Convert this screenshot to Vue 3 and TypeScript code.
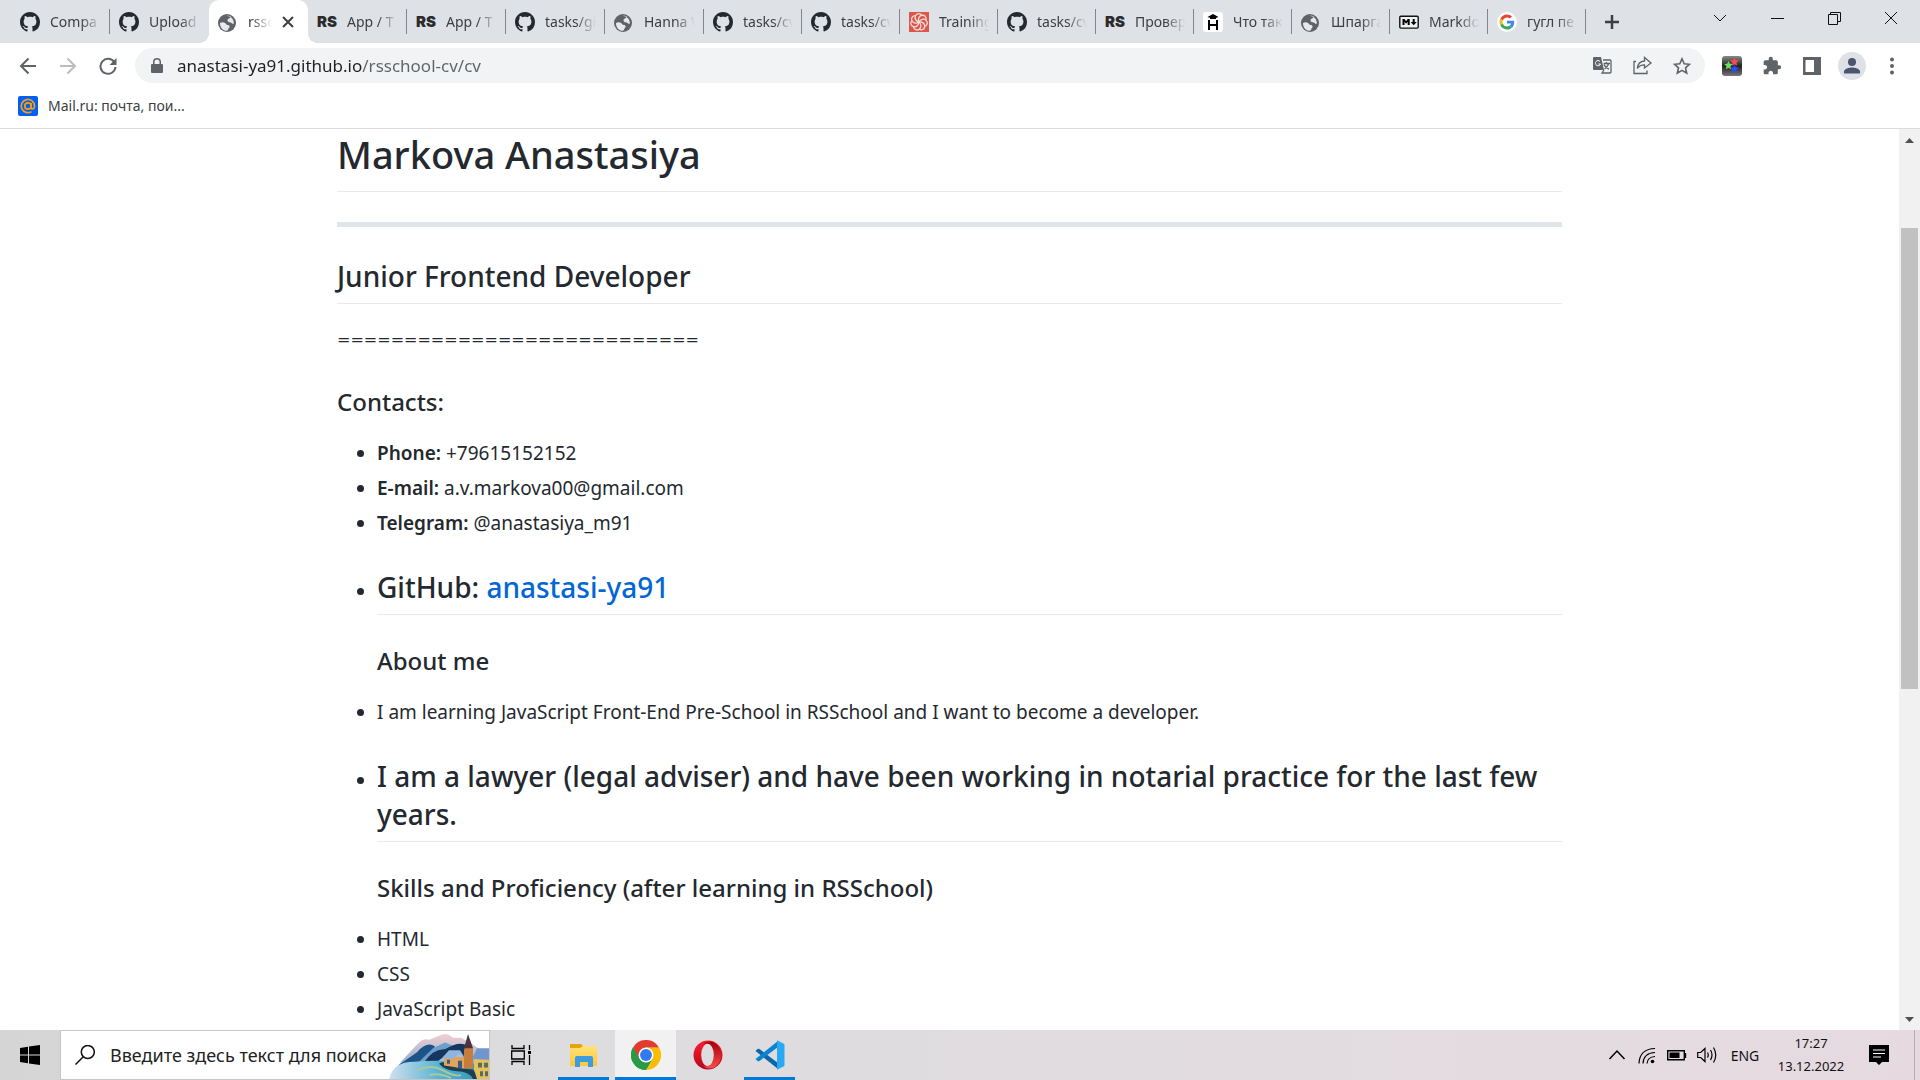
<script setup lang="ts">
import { ref } from 'vue'

interface Tab {
  icon: string
  title: string
  active?: boolean
  quiet?: boolean
}

const tabs: Tab[] = [
  { icon: 'github', title: 'Compa' },
  { icon: 'github', title: 'Upload', quiet: true },
  { icon: 'globe', title: 'rssc', active: true },
  { icon: 'rs', title: 'App / T' },
  { icon: 'rs', title: 'App / T' },
  { icon: 'github', title: 'tasks/gi' },
  { icon: 'globe', title: 'Hanna V' },
  { icon: 'github', title: 'tasks/cv' },
  { icon: 'github', title: 'tasks/cv' },
  { icon: 'training', title: 'Training' },
  { icon: 'github', title: 'tasks/cv' },
  { icon: 'rs', title: 'Провер' },
  { icon: 'hexlet', title: 'Что так' },
  { icon: 'globe', title: 'Шпарга' },
  { icon: 'markdown', title: 'Markdo' },
  { icon: 'google', title: 'гугл пе' },
]

const address = ref('anastasi-ya91.github.io/rsschool-cv/cv')
const query = ref('')

const contacts = [
  { label: 'Phone:', value: '+79615152152' },
  { label: 'E-mail:', value: 'a.v.markova00@gmail.com' },
  { label: 'Telegram:', value: '@anastasiya_m91' },
]
const skills = ['HTML', 'CSS', 'JavaScript Basic']
const divider = '='.repeat(27)

const apps = [
  { icon: 'explorer', name: 'Explorer', open: true, current: false },
  { icon: 'chrome', name: 'Chrome', open: true, current: true },
  { icon: 'opera', name: 'Opera', open: false, current: false },
  { icon: 'vscode', name: 'VS Code', open: true, current: false },
]
</script>

<template>
  <svg class="sprite" aria-hidden="true">
    <defs>
      <linearGradient id="opera-ring" x1="0" y1="0" x2="0" y2="1">
        <stop offset="0" stop-color="#ff1b2d" />
        <stop offset="1" stop-color="#b5081c" />
      </linearGradient>
      <linearGradient id="opera-inner" x1="0" y1="0" x2="0" y2="1">
        <stop offset="0" stop-color="#a0000c" />
        <stop offset="1" stop-color="#ff4b4b" />
      </linearGradient>
      <linearGradient id="folder-face" x1="0" y1="0" x2="0" y2="1">
        <stop offset="0" stop-color="#ffe07a" />
        <stop offset="1" stop-color="#fcc934" />
      </linearGradient>
      <linearGradient id="hill-back" x1="0" y1="0" x2="0" y2="1">
        <stop offset="0" stop-color="#f3cfd2" />
        <stop offset="1" stop-color="#6fa3d6" />
      </linearGradient>
      <linearGradient id="lake" x1="0" y1="0" x2="1" y2="0">
        <stop offset="0" stop-color="#cfe0ee" />
        <stop offset="0.5" stop-color="#57b3d3" />
        <stop offset="1" stop-color="#2f8fb0" />
      </linearGradient>
      <linearGradient id="ext-box" x1="0" y1="0" x2="0" y2="1">
        <stop offset="0" stop-color="#8a8a8a" />
        <stop offset="0.5" stop-color="#222" />
        <stop offset="1" stop-color="#777" />
      </linearGradient>
    </defs>
    <symbol id="github" viewBox="0 0 16 16">
      <path fill="#24292f" d="M8 0C3.58 0 0 3.58 0 8c0 3.54 2.29 6.53 5.47 7.59.4.07.55-.17.55-.38 0-.19-.01-.82-.01-1.49-2.01.37-2.53-.49-2.69-.94-.09-.23-.48-.94-.82-1.13-.28-.15-.68-.52-.01-.53.63-.01 1.08.58 1.23.82.72 1.21 1.87.87 2.33.66.07-.52.28-.87.51-1.07-1.78-.2-3.64-.89-3.64-3.95 0-.87.31-1.59.82-2.15-.08-.2-.36-1.02.08-2.12 0 0 .67-.21 2.2.82.64-.18 1.32-.27 2-.27s1.36.09 2 .27c1.53-1.04 2.2-.82 2.2-.82.44 1.1.16 1.92.08 2.12.51.56.82 1.27.82 2.15 0 3.07-1.87 3.75-3.65 3.95.29.25.54.73.54 1.48 0 1.07-.01 1.93-.01 2.2 0 .21.15.46.55.38A8.01 8.01 0 0 0 16 8c0-4.42-3.58-8-8-8z" />
    </symbol>
    <symbol id="globe" viewBox="0 0 20 20">
      <circle cx="9" cy="11" r="9" fill="#5f6368" />
      <path fill="#e6e8eb" d="M2 11c3-1.500 5-.5 6 1s3 .5 3.500 2-1 2-1.500 3.500-1 1.300-2 1.200C4.500 18.300 1.800 15 2 11zM8.500 4c1.500-.6 3.500-.4 4.500.4-1 .6-.5 1.600-2 2S9 8 10 9.500s2.500.5 3.500 1.500 1.500 1 2.400.6c0-3-1.300-5.600-3.700-6.900-1.200-.6-2.500-.9-3.700-.7z" />
    </symbol>
    <symbol id="training" viewBox="0 0 20 20">
      <path fill="#d9584b" d="M0 0h20v20H0z" />
      <g fill="none" stroke="#f7dcd8" stroke-width="1.300">
        <path v-for="n in 7" :key="n" :transform="`rotate(${n * 51} 10 10)`" d="M10 10c-1-3 0-6 3-6.500s5 2 4 5" />
      </g>
    </symbol>
    <symbol id="hexlet" viewBox="0 0 20 20">
      <rect width="20" height="20" rx="3" fill="#fff" />
      <path d="M4.500 5 10 2l5.500 3L12 6.200H8zM5 8h2v4h6V8h2v10h-2v-4H7v4H5z" />
      <path d="M7 5h6v2H7z" />
    </symbol>
    <symbol id="markdown" viewBox="0 0 20 20">
      <rect x=".8" y="4.300" width="18.400" height="11.800" rx="1" fill="#eef0f2" stroke="#111" stroke-width="1.400" />
      <path d="M3.500 13V7h2l1.600 2.200L8.700 7h2v6h-2V9.800l-1.600 2-1.600-2V13zM13.700 7h2v3h2l-3 3.300-3-3.300h2z" />
    </symbol>
    <symbol id="google" viewBox="0 0 64 64">
      <circle cx="32" cy="32" r="32" fill="#fff" />
      <g transform="translate(8 8)">
        <path fill="#ea4335" d="M24 9.500c3.540 0 6.710 1.220 9.210 3.600l6.850-6.850C35.900 2.380 30.470 0 24 0 14.620 0 6.510 5.380 2.560 13.220l7.980 6.190C12.430 13.720 17.740 9.500 24 9.500z" />
        <path fill="#4285f4" d="M46.980 24.550c0-1.570-.15-3.090-.38-4.550H24v9.020h12.940c-.58 2.960-2.260 5.480-4.780 7.180l7.730 6c4.510-4.180 7.090-10.360 7.090-17.650z" />
        <path fill="#fbbc05" d="M10.530 28.590c-.48-1.450-.76-2.990-.76-4.590s.27-3.140.76-4.590l-7.980-6.190C.92 16.460 0 20.120 0 24c0 3.880.92 7.540 2.560 10.780l7.970-6.190z" />
        <path fill="#34a853" d="M24 48c6.480 0 11.930-2.130 15.890-5.810l-7.730-6c-2.150 1.450-4.920 2.300-8.160 2.300-6.260 0-11.570-4.220-13.470-9.910l-7.980 6.190C6.510 42.620 14.620 48 24 48z" />
      </g>
    </symbol>
    <symbol id="explorer" viewBox="0 0 30 30">
      <path fill="#e5a50a" d="M1 4h11l2 2v5H1z" />
      <path fill="url(#folder-face)" d="M1 8h10l3-2h14v20H1z" />
      <path fill="#3f9be0" d="M6 27V18q0-2 2-2h14q2 0 2 2v9h-5v-5h-8v5z" />
    </symbol>
    <symbol id="chrome" viewBox="0 0 48 48">
      <path fill="#34a853" d="M24 24 3.200 12A24 24 0 0 0 24 48l10.400-18z" />
      <path fill="#fbbc05" d="M24 24h20.800A24 24 0 0 1 24 48l10.400-18zM24 12h20.800A24 24 0 0 1 24 48l10.400-18z" />
      <path fill="#e33b2e" d="M3.200 12a24 24 0 0 1 41.600 0H24L13.600 30z" />
      <path fill="#2a9a47" d="M3.200 12 13.600 30A12 12 0 0 0 34.400 30L24 48A24 24 0 0 1 3.200 12z" />
      <circle cx="24" cy="24" r="12" fill="#fff" />
      <circle cx="24" cy="24" r="9.500" fill="#2f7bf0" />
    </symbol>
    <symbol id="opera" viewBox="0 0 30 30">
      <circle cx="15" cy="15" r="14.500" fill="url(#opera-ring)" />
      <path fill="url(#opera-inner)" d="M10 4.500C13 1 19 .5 23 3.800a14.500 14.500 0 0 1 0 22.400c-4 3.300-10 2.800-13-.7 5 3 11-1 11-10.500S15 1.500 10 4.500z" />
      <ellipse cx="14.500" cy="15" rx="6.300" ry="11.300" fill="#dddcde" />
    </symbol>
    <symbol id="vscode" viewBox="0 0 30 30">
      <path fill="#0a67a8" d="m.5 11 2-2q1-.7 2 0L23 23v6z" />
      <path fill="#0a84d0" d="m.5 19 2 2q1 .7 2 0L23 7V1z" />
      <path fill="#0a84d0" d="M22 29.500V.5L25 2v26z" />
      <path fill="#29a9f2" d="M22 .5 28.500 3.500q1 .5 1 1.500v20q0 1-1 1.500L22 29.500z" />
    </symbol>
  </svg>

  <div class="desktop">
    <header>
      <div class="tabstrip">
        <nav class="tabs" aria-label="Tabs">
          <button v-for="(tab, i) in tabs" :key="i" class="tab" :class="{ active: tab.active, quiet: tab.quiet || tab.active }">
            <span v-if="tab.icon === 'rs'" class="favicon rs">RS</span>
            <svg v-else class="favicon"><use :href="`#${tab.icon}`" /></svg>
            <span class="tab-title">{{ tab.title }}</span>
            <svg v-if="tab.active" class="tab-close" viewBox="0 0 12 12"><path d="m1 1 10 10M11 1 1 11" /></svg>
          </button>
        </nav>
        <button class="new-tab" aria-label="New tab">
          <svg width="16" height="16" viewBox="0 0 16 16"><path d="M8 1v14M1 8h14" stroke="#3c4043" stroke-width="2.500" /></svg>
        </button>
        <div class="window-buttons">
          <button aria-label="Search tabs"><svg width="14" height="14" viewBox="0 0 14 14"><path d="m1 4 6 6 6-6" /></svg></button>
          <button aria-label="Minimize"><svg width="14" height="14" viewBox="0 0 14 14"><path d="M1 7.500h13" /></svg></button>
          <button aria-label="Restore"><svg width="14" height="14" viewBox="0 0 14 14"><path d="M1.500 3.500h9v10h-9zM3.500 3V1.500h10v9H11" /></svg></button>
          <button aria-label="Close"><svg width="14" height="14" viewBox="0 0 14 14"><path d="m1 1 12 12M13 1 1 13" /></svg></button>
        </div>
      </div>

      <div class="toolbar">
        <button class="tool" aria-label="Back"><svg width="18" height="18" viewBox="0 0 18 18"><path d="M17 9H2M9.500 1.500 2 9l7.500 7.500" /></svg></button>
        <button class="tool dim" aria-label="Forward"><svg width="18" height="18" viewBox="0 0 18 18"><path d="M1 9h15M8.500 1.500 16 9l-7.500 7.500" /></svg></button>
        <button class="tool" aria-label="Reload"><svg width="18" height="18" viewBox="0 0 18 18"><path d="M15.500 5.500A7.500 7.500 0 1 0 16.500 10" /><path class="solid" d="M17.500 1v7h-7z" /></svg></button>
        <div class="omnibox">
          <svg class="lock" width="12" height="16" viewBox="0 0 12 16"><path fill="#5f6368" d="M1 6h1V4a4 4 0 0 1 8 0v2h1q1 0 1 1v7q0 1-1 1H1q-1 0-1-1V7q0-1 1-1zm2.500 0h5V4a2.500 2.500 0 0 0-5 0z" /></svg>
          <input v-model="address" class="address" aria-label="Address" spellcheck="false" />
          <button class="tool" aria-label="Translate">
            <svg width="19" height="19" viewBox="0 0 19 19">
              <path class="solid" d="M1 1h7l3 13H1q-1 0-1-1V2q0-1 1-1z" />
              <path d="M10 4h7q1 0 1 1v11q0 1-1 1H9l2-3M10.500 7.500H17M13.500 6v1.500M11 8.500q2 4 5 4.500M15.500 8q-1 3-4 5" class="thin" />
              <path d="M7 5.500A2.600 2.600 0 1 0 7.500 8H5.300" class="white" />
            </svg>
          </button>
          <button class="tool" aria-label="Share">
            <svg width="19" height="19" viewBox="0 0 19 19"><path class="thin" d="M3 5.500H1v12h13v-3M11.500 5V1.500L18 7l-6.500 5V8.800C8 8.800 6 9.800 4.300 12.500 4.700 8 7.500 5.300 11.500 5z" /></svg>
          </button>
          <button class="tool" aria-label="Bookmark">
            <svg width="18" height="18" viewBox="0 0 18 18"><path d="m9 1.800 2.200 5 5.300.5-4 3.600 1.200 5.300L9 13.400l-4.700 2.800 1.200-5.300-4-3.600 5.300-.5z" class="medium" /></svg>
          </button>
        </div>
        <button class="tool" aria-label="Stars extension">
          <svg width="20" height="20" viewBox="0 0 20 20">
            <rect width="20" height="20" rx="3" fill="url(#ext-box)" />
            <polygon fill="#ff4a4a" points="12.500,1.500 13.800,4.300 16.800,4.600 14.500,6.700 15.200,9.700 12.500,8.200 9.800,9.700 10.500,6.700 8.200,4.600 11.200,4.300" />
            <polygon fill="#6be05c" points="6.500,5 7.800,7.800 10.800,8.100 8.500,10.200 9.200,13.200 6.500,11.700 3.800,13.200 4.500,10.200 2.200,8.100 5.200,7.800" />
            <polygon fill="#2b4dff" points="12.500,8.500 13.800,11.300 16.800,11.600 14.500,13.700 15.200,16.700 12.500,15.200 9.800,16.700 10.500,13.700 8.200,11.600 11.200,11.300" />
          </svg>
        </button>
        <button class="tool" aria-label="Extensions">
          <svg width="20" height="20" viewBox="0 0 24 24"><path class="solid" d="M20.500 11H19V7c0-1.100-.9-2-2-2h-4V3.500a2.500 2.500 0 0 0-5 0V5H4c-1.100 0-1.990.9-1.990 2v3.800H3.500c1.490 0 2.700 1.210 2.700 2.700s-1.210 2.700-2.700 2.700H2V20c0 1.100.9 2 2 2h3.800v-1.500c0-1.490 1.210-2.700 2.700-2.700 1.490 0 2.700 1.210 2.700 2.700V22H17c1.100 0 2-.9 2-2v-4h1.500a2.500 2.500 0 0 0 0-5z" /></svg>
        </button>
        <button class="tool" aria-label="Side panel">
          <svg width="18" height="18" viewBox="0 0 18 18"><path class="solid" fill-rule="evenodd" d="M0 0h18v18H0zM2.500 3v12H11V3z" /></svg>
        </button>
        <button class="tool" aria-label="Profile">
          <svg width="28" height="28" viewBox="0 0 28 28"><circle cx="14" cy="14" r="14" fill="#dee1e6" /><circle cx="14" cy="10" r="4" fill="#4a5570" /><path class="person" d="M6 21.500v-2c0-2.700 5.300-4 8-4s8 1.300 8 4v2z" /></svg>
        </button>
        <button class="tool" aria-label="Menu">
          <svg width="18" height="18" viewBox="0 0 18 18"><g fill="#5f6368"><circle cx="9" cy="2.500" r="2" /><circle cx="9" cy="9" r="2" /><circle cx="9" cy="15.500" r="2" /></g></svg>
        </button>
      </div>

      <div class="bookmarks">
        <a class="bookmark" href="#mail">
          <svg width="20" height="20" viewBox="0 0 20 20"><rect width="20" height="20" rx="2" fill="#005ff9" /><circle cx="10" cy="10" r="3.200" fill="none" stroke="#ff9e00" stroke-width="1.700" /><path d="M13.200 7v4q0 2 1.500 2t1.800-3A6.600 6.600 0 1 0 13.500 15.600" fill="none" stroke="#ff9e00" stroke-width="1.700" /></svg>
          <span>Mail.ru: почта, пои...</span>
        </a>
      </div>
    </header>

    <div class="viewport">
      <main class="page">
        <article class="markdown">
          <h1>Markova Anastasiya</h1>
          <hr />
          <h2>Junior Frontend Developer</h2>
          <p class="divider">{{ divider }}</p>
          <h3>Contacts:</h3>
          <ul>
            <li v-for="c in contacts" :key="c.label"><strong>{{ c.label }}</strong> {{ c.value }}</li>
            <li>
              <h2>GitHub: <a href="#github-profile">anastasi-ya91</a></h2>
              <h3>About me</h3>
            </li>
            <li class="flush">I am learning JavaScript Front-End Pre-School in RSSchool and I want to become a developer.</li>
            <li>
              <h2>I am a lawyer (legal adviser) and have been working in notarial practice for the last few years.</h2>
              <h3>Skills and Proficiency (after learning in RSSchool)</h3>
            </li>
            <li v-for="(s, i) in skills" :key="s" :class="{ flush: i === 0 }">{{ s }}</li>
          </ul>
        </article>
      </main>
      <div class="scrollbar" aria-hidden="true">
        <svg viewBox="0 0 21 21"><path d="M6 14h9l-4.500-5z" /></svg>
        <div class="track"><div class="thumb"></div></div>
        <svg viewBox="0 0 21 21"><path d="M6 8h9l-4.500 5z" /></svg>
      </div>
    </div>

    <footer class="taskbar">
      <button class="start" aria-label="Start">
        <svg width="20" height="20" viewBox="0 0 20 20"><path d="m0 3 8-1.200v7.700H0zM9 1.600 20 0v9.500H9zM0 10.500h8v7.700L0 17zM9 10.500h11V20L9 18.400z" /></svg>
      </button>
      <label class="search">
        <svg width="20" height="20" viewBox="0 0 20 20"><path d="M.5 19.500 8 12M19.300 7a6.500 6.500 0 1 1-13 0 6.500 6.500 0 0 1 13 0z" fill="none" stroke="#111" stroke-width="1.500" /></svg>
        <input v-model="query" placeholder="Введите здесь текст для поиска" aria-label="Поиск" />
        <svg class="scene" width="100" height="46" viewBox="0 0 100 48" preserveAspectRatio="none">
          <path fill="url(#hill-back)" d="M12 30 28 12q6-7 12-5l12-5q6-3 12 3l8 0 8 4 8 6 12 8v20H6z" />
          <path fill="#1c5488" d="M9 34 28 20q10-12 18-6l-10 18z" />
          <path fill="#6c9fcb" d="M28 32 44 16l12-6 10 4-24 20z" />
          <path fill="#17365f" d="M34 32q10-16 22-15 12-8 20-5l4 20z" />
          <path fill="#a9bfd8" d="M46 32q12-12 26-12l6 12z" />
          <path fill="url(#lake)" d="M0 48q4-18 25-18 20-2 45 0l30 4v14z" />
          <path fill="none" stroke="#a9c99b" stroke-width="2" d="M28 39q14-7 26 0t18 5M40 44q10-3 22 3" />
          <path fill="#1d3f52" d="M50 32q4-4 12 2 10 4 22 4l6 10h-6q-4-8-16-8-12-1-18-8z" />
          <path fill="#c77c3c" d="M75 18 79 3l5 14v20h-9z" />
          <path fill="#4b3440" d="M75 16 79 1l5 15z" />
          <path fill="#e4a35a" d="M55 25h20v12l-20-3z" />
          <path fill="#8db5df" d="m53 26 7-8 11 0 5 8-6-5-6 6z" />
          <path fill="#3b5a86" d="M69 29h4v8h-4zM58 28h3v4h-3z" />
          <path fill="#e5c05e" d="M85 26h15v22H88l-3-10z" />
          <path fill="#7095cf" d="m83 27 5-11h12v12z" />
          <path fill="#5a6d5c" d="M89 31h4v5h-4zM95 31h4v5h-4zM91 40h3v5h-3zM96 40h3v5h-3z" />
        </svg>
      </label>
      <button class="task-view" aria-label="Task view">
        <svg width="21" height="20" viewBox="0 0 21 20"><path d="M1 0v3.500h12V0M1 20v-3.500h12V20M.7 6h12.600v8H.7zM18.500 0v5M18.500 10v10" fill="none" stroke="#000" stroke-width="1.300" /><path d="M17 6h3v3h-3z" /></svg>
      </button>
      <button v-for="a in apps" :key="a.icon" class="app" :class="{ open: a.open, current: a.current }" :aria-label="a.name">
        <svg width="30" height="30"><use :href="`#${a.icon}`" /></svg>
      </button>
      <div class="tray">
        <button class="tray-icon" aria-label="Hidden icons"><svg width="18" height="18" viewBox="0 0 18 18"><path d="m1.500 13 7.500-8 7.500 8" stroke-width="1.500" /></svg></button>
        <button class="tray-icon" aria-label="Network"><svg width="18" height="18" viewBox="0 0 18 18"><path d="M1 17.500Q1.500 3 17 2.500M5 17.500Q5.500 7 17 6.500M9 17.500q.5-6.500 8-7" /><circle cx="14.500" cy="15.500" r="1.800" fill="#000" stroke="none" /></svg></button>
        <button class="tray-icon" aria-label="Battery"><svg width="20" height="18" viewBox="0 0 20 18"><path d="M.7 4.700h16.600v9H.7zM18.500 7v5" stroke-width="1.400" /><path d="M2.500 6.500h10V12h-10z" fill="#000" stroke="none" /></svg></button>
        <button class="tray-icon" aria-label="Volume"><svg width="20" height="18" viewBox="0 0 20 18"><path d="M.7 6.500h3L8 2.500v13l-4.300-4h-3zM10.500 6.500q1.500 2.500 0 5M13.500 4q3 5 0 10M16.500 1.500q4.500 7.500 0 15" /></svg></button>
        <button class="language">ENG</button>
        <time class="clock" datetime="2022-12-13T17:27"><span>17:27</span><span>13.12.2022</span></time>
        <button class="notice" aria-label="Notifications"><svg width="20" height="20" viewBox="0 0 20 20"><path d="M0 0h20v17h-7l-3 3-3-3H0z" /><path d="M4 5h12M4 8.500h12M4 12h8" stroke="#fff" stroke-width="1.200" /></svg></button>
        <div class="peek"></div>
      </div>
    </footer>
  </div>
</template>

<style>
html,
body {
  margin: 0;
  background: #fff;
}
</style>

<style scoped>
.sprite {
  position: absolute;
  width: 0;
  height: 0;
}
.desktop {
  display: flex;
  flex-direction: column;
  height: 100vh;
  overflow: hidden;
  font-family: 'Noto Sans', 'Open Sans', sans-serif;
  color: #24292f;
}
button {
  display: flex;
  align-items: center;
  justify-content: center;
  flex: none;
  padding: 0;
  border: 0;
  background: none;
  font: inherit;
  color: inherit;
}
input {
  min-width: 0;
  padding: 0;
  border: 0;
  outline: 0;
  background: none;
  font: inherit;
}

/* tab strip */
.tabstrip {
  display: flex;
  height: 43px;
  padding-left: 11px;
  background: #dee1e6;
}
.tabs {
  display: flex;
}
.tab {
  justify-content: flex-start;
  width: 98px;
  height: 43px;
  padding: 0 9px;
  gap: 10px;
  position: relative;
  font-size: 14px;
  color: #3c4043;
}
.tab:nth-child(-n + 7) {
  width: 99px;
}
.tab:not(.quiet)::after {
  content: '';
  position: absolute;
  right: 0;
  top: 9px;
  width: 1px;
  height: 25px;
  background: #80868b;
}
.favicon {
  flex: none;
  width: 20px;
  height: 20px;
}
.favicon.rs {
  font-family: Inter, sans-serif;
  font-size: 15px;
  font-weight: 900;
  line-height: 20px;
  color: #2b2b2b;
}
.tab-title {
  flex: 1;
  min-width: 0;
  overflow: hidden;
  white-space: nowrap;
  text-align: left;
  mask-image: linear-gradient(90deg, #000 calc(100% - 20px), transparent);
}
.tab.active {
  border-radius: 10px 10px 0 0;
  background: #fff;
}
.tab.active::before {
  content: '';
  position: absolute;
  left: -10px;
  right: -10px;
  bottom: 0;
  height: 10px;
  background:
    radial-gradient(circle at 0 0, transparent 10px, #fff 10px) left / 10px 10px no-repeat,
    radial-gradient(circle at 100% 0, transparent 10px, #fff 10px) right / 10px 10px no-repeat;
}
.tab-close {
  flex: none;
  width: 12px;
  height: 12px;
  margin-right: 5px;
  stroke: #3c4043;
  stroke-width: 2;
}
.new-tab {
  width: 52px;
}
.window-buttons {
  display: flex;
  margin-left: auto;
  padding-right: 1px;
}
.window-buttons button {
  width: 57px;
  height: 36px;
}
.window-buttons svg {
  fill: none;
  stroke: #111;
}

/* toolbar */
.toolbar {
  display: flex;
  align-items: center;
  height: 45px;
  padding: 0 8px;
}
.tool {
  width: 40px;
  height: 35px;
}
.tool path {
  fill: none;
  stroke: #5f6368;
  stroke-width: 2;
}
.tool path.solid {
  fill: #5f6368;
  stroke: none;
}
.tool path.person {
  fill: #4a5570;
  stroke: none;
}
.tool path.thin {
  stroke-width: 1.3;
}
.tool path.medium {
  stroke-width: 1.6;
}
.tool path.white {
  stroke: #fff;
  stroke-width: 1;
}
.tool.dim path {
  stroke: #babcbe;
}
.omnibox {
  display: flex;
  align-items: center;
  flex: 1;
  height: 35px;
  margin: 0 7px;
  padding: 0 3px 0 16px;
  border-radius: 18px;
  background: #f1f3f4;
}
.lock {
  flex: none;
}
.address {
  flex: 1;
  height: 30px;
  margin-left: 14px;
  font-size: 17px;
  color: transparent;
  background: linear-gradient(90deg, #202124 185px, #5f6368 185px);
  background-clip: text;
  -webkit-background-clip: text;
}
.bookmarks {
  display: flex;
  align-items: center;
  height: 40px;
  padding: 0 18px;
  border-bottom: 1px solid #dadce0;
}
.bookmark {
  display: flex;
  align-items: center;
  gap: 10px;
  margin-bottom: 5px;
  font-size: 14px;
  color: #3c4043;
  text-decoration: none;
}

/* document */
.viewport {
  display: flex;
  flex: 1;
  min-height: 0;
}
.page {
  flex: 1;
  overflow: hidden;
}
.markdown {
  max-width: 1225px;
  margin: 0 auto;
  font-size: 19px;
  line-height: 30px;
}
.markdown h1,
.markdown h2,
.markdown h3 {
  margin: 30px 0 20px;
  font-weight: 500;
}
.markdown h1 {
  margin-top: 0;
  padding-bottom: 12px;
  border-bottom: 1px solid #e8eaed;
  font-size: 38px;
  line-height: 50px;
}
.markdown h2 {
  padding-bottom: 8px;
  border-bottom: 1px solid #e8eaed;
  font-size: 28px;
  line-height: 38px;
}
.markdown h3 {
  font-size: 24px;
  line-height: 32px;
}
.markdown hr {
  height: 5px;
  margin: 30px 0;
  border: 0;
  background: #e1e4e8;
}
.markdown p {
  margin: 20px 0;
}
.markdown .divider {
  font-family: 'DejaVu Sans', sans-serif;
  font-size: 16px;
  line-height: 32px;
}
.markdown ul {
  margin: 0;
  padding-left: 40px;
}
.markdown li + li {
  margin-top: 5px;
}
.markdown li.flush {
  margin-top: 0;
}
.markdown strong {
  font-weight: 600;
}
.markdown a {
  color: #0366d6;
  text-decoration: none;
}
.scrollbar {
  display: flex;
  flex-direction: column;
  width: 21px;
  background: #f1f1f1;
}
.scrollbar svg {
  width: 21px;
  height: 21px;
  fill: #505050;
}
.track {
  flex: 1;
  padding: 78px 2px 0;
}
.thumb {
  height: 59%;
  background: #c1c1c1;
}

/* taskbar */
.taskbar {
  display: flex;
  flex: none;
  height: 50px;
  background: linear-gradient(90deg, #d5d5d6, #dddcde 30%, #e0dcdf 55%, #e6dae0);
}
.start {
  width: 60px;
}
.search {
  display: flex;
  align-items: center;
  width: 428px;
  border: 1px solid #c6c6c6;
  background: #fff;
  position: relative;
}
.search > svg:first-child {
  flex: none;
  margin-left: 14px;
}
.search input {
  flex: 1;
  margin-left: 15px;
  font-size: 18px;
}
.search input::placeholder {
  color: #222;
  opacity: 1;
}
.scene {
  position: absolute;
  right: 0;
  bottom: 0;
}
.task-view {
  width: 62px;
}
.app {
  width: 61px;
  margin-left: 1px;
  position: relative;
}
.app.current {
  background: #f1f1f2;
}
.app.open::after {
  content: '';
  position: absolute;
  left: 5px;
  right: 5px;
  bottom: 0;
  height: 3px;
  background: #0078d7;
}
.app.current::after {
  left: 0;
  right: 0;
}
.tray {
  display: flex;
  margin-left: auto;
  color: #111;
}
.tray-icon {
  width: 30px;
}
.tray-icon svg {
  fill: none;
  stroke: #000;
  stroke-width: 1.2;
}
.language {
  width: 46px;
  font-size: 14px;
}
.clock {
  display: flex;
  flex-direction: column;
  align-items: center;
  justify-content: center;
  width: 86px;
  font-size: 13px;
  line-height: 23px;
  white-space: nowrap;
}
.notice {
  width: 50px;
}
.peek {
  width: 5px;
  margin-left: 10px;
  border-left: 1px solid #b5adb1;
}
</style>
